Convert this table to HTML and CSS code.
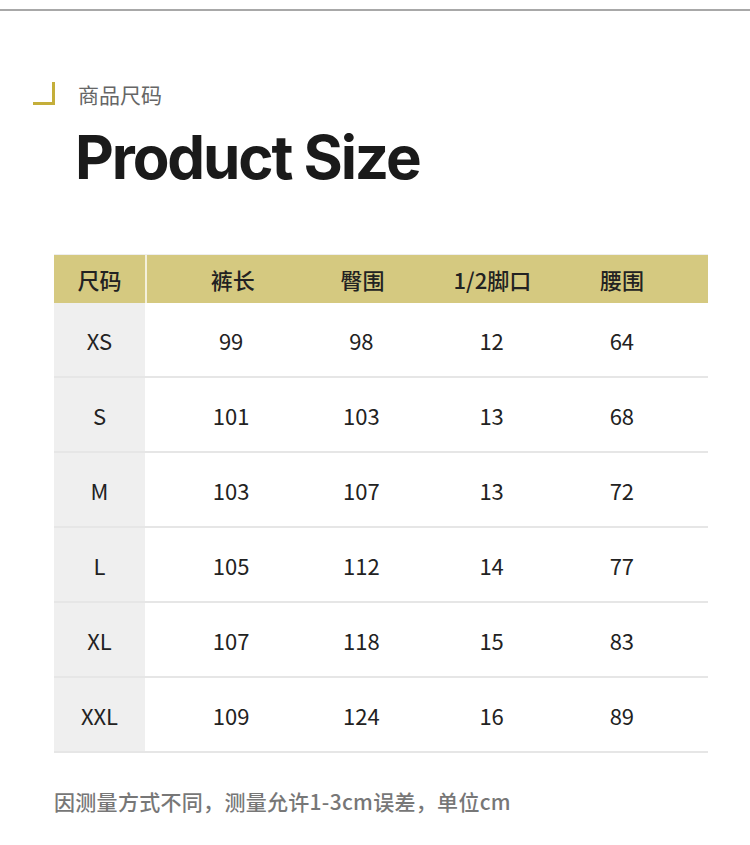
FILE: index.html
```html
<!DOCTYPE html>
<html lang="zh">
<head>
<meta charset="utf-8">
<link rel="stylesheet" href="styles.css">
</head>
<body>
<div class="page">
  <div class="topline"></div>
  <div class="heading">
    <span class="bracket"></span>
    <span class="sub">商品尺码</span>
  </div>
  <h1 class="title">Product Size</h1>
  <div class="table">
    <div class="row head">
      <div class="size">尺码</div>
      <div class="cells"><div>裤长</div><div>臀围</div><div>1/2脚口</div><div>腰围</div></div>
    </div>
    <div class="row"><div class="size">XS</div><div class="cells"><div>99</div><div>98</div><div>12</div><div>64</div></div></div>
    <div class="row"><div class="size">S</div><div class="cells"><div>101</div><div>103</div><div>13</div><div>68</div></div></div>
    <div class="row"><div class="size">M</div><div class="cells"><div>103</div><div>107</div><div>13</div><div>72</div></div></div>
    <div class="row"><div class="size">L</div><div class="cells"><div>105</div><div>112</div><div>14</div><div>77</div></div></div>
    <div class="row"><div class="size">XL</div><div class="cells"><div>107</div><div>118</div><div>15</div><div>83</div></div></div>
    <div class="row"><div class="size">XXL</div><div class="cells"><div>109</div><div>124</div><div>16</div><div>89</div></div></div>
  </div>
  <p class="note">因测量方式不同，测量允许1-3cm误差，单位cm</p>
</div>
</body>
</html>
```
FILE: styles.css
```css
html, body {
  margin: 0;
  padding: 0;
  background: #fff;
}
body {
  font-family: "Noto Sans CJK SC", "Noto Sans", sans-serif;
  color: #222;
}
.page {
  width: 750px;
  height: 845px;
  padding-top: 9px;
  box-sizing: border-box;
}
.topline {
  height: 2px;
  background: #a8a8a8;
}
.heading {
  display: flex;
  align-items: flex-end;
  margin-top: 70px;
  padding-left: 33px;
  height: 24px;
}
.bracket {
  width: 19px;
  height: 20px;
  border-right: 3px solid #c4ae3a;
  border-bottom: 3px solid #c4ae3a;
}
.sub {
  margin-left: 23px;
  font-size: 21px;
  line-height: 24px;
  color: #666;
  position: relative;
  top: 1px;
}
.title {
  margin: 12px 0 0 75px;
  font-family: Inter, "Liberation Sans", sans-serif;
  font-weight: 700;
  font-size: 60px;
  line-height: 80px;
  letter-spacing: -2.1px;
  color: #1a1a1a;
}
.table {
  margin: 57px 42px 0 54px;
  border-top: 1px solid #eeeeee;
}
.row {
  display: flex;
  height: 75px;
  border-bottom: 2px solid #e6e6e6;
  box-sizing: border-box;
  font-size: 22px;
}
.row.head {
  height: 48px;
  background: #d5c980;
  border-bottom: none;
  font-weight: 500;
}
.size {
  width: 91px;
  flex: none;
  background: #efefef;
  display: flex;
  align-items: center;
  justify-content: center;
}
.head .size {
  background: #d5c980;
  border-right: 2px solid #f4f0dc;
}
.cells {
  flex: 1;
  display: flex;
  padding: 0 21px;
}
.cells > div {
  flex: 1;
  display: flex;
  align-items: center;
  justify-content: center;
}
.note {
  margin: 33px 0 0 54px;
  font-size: 21px;
  font-weight: 500;
  color: #777;
  letter-spacing: 0.3px;
}
```
